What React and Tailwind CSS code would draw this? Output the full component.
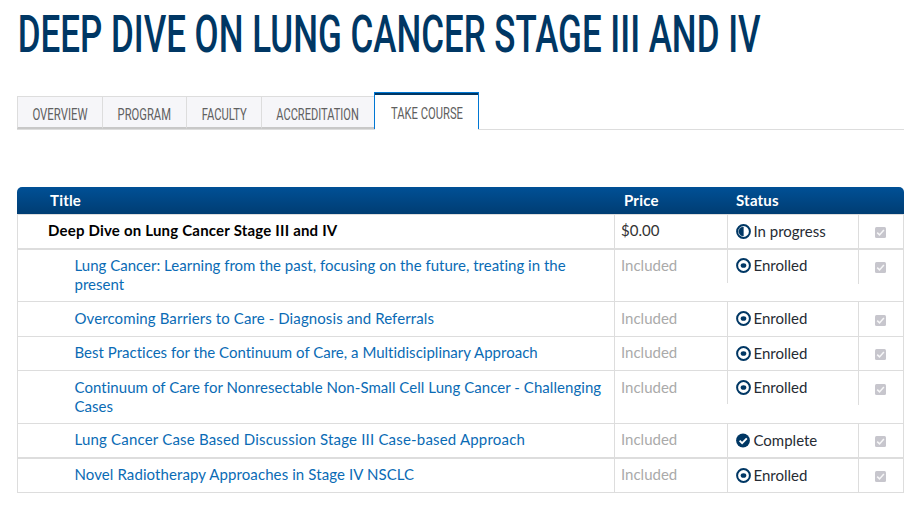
import React from 'react';
import clsx from 'clsx';

const tabs = [
  { label: 'Overview', width: 'w-[85px]', scale: 'scale-x-[0.69]' },
  { label: 'Program', width: 'w-[84px]', scale: 'scale-x-[0.68]' },
  { label: 'Faculty', width: 'w-[75px]', scale: 'scale-x-[0.68]' },
  { label: 'Accreditation', width: 'w-[113px]', scale: 'scale-x-[0.67]' },
];

const rows = [
  {
    title: 'Deep Dive on Lung Cancer Stage III and IV',
    price: '$0.00',
    status: 'In progress',
    parent: true,
    tracking: 'tracking-[0.2px]',
    height: 'h-[35px] border-b-2',
    textPad: 'pt-[6px]',
    statusPad: 'pt-[7px]',
    checkPad: 'pt-[12px]',
  },
  {
    title: 'Lung Cancer: Learning from the past, focusing on the future, treating in the present',
    price: 'Included',
    status: 'Enrolled',
    tracking: 'tracking-[0.01px]',
    height: 'h-[52px] border-b',
    textPad: 'pt-[6px]',
    statusPad: 'pt-[6px]',
    checkPad: 'pt-[12px]',
    short: true,
  },
  {
    title: 'Overcoming Barriers to Care - Diagnosis and Referrals',
    price: 'Included',
    status: 'Enrolled',
    tracking: 'tracking-[0.1px]',
    height: 'h-[35px] border-b',
    textPad: 'pt-[7px]',
    statusPad: 'pt-[7px]',
    checkPad: 'pt-[13px]',
  },
  {
    title: 'Best Practices for the Continuum of Care, a Multidisciplinary Approach',
    price: 'Included',
    status: 'Enrolled',
    tracking: 'tracking-[0.01px]',
    height: 'h-[34px] border-b',
    textPad: 'pt-[6px]',
    statusPad: 'pt-[7px]',
    checkPad: 'pt-[12px]',
  },
  {
    title: 'Continuum of Care for Nonresectable Non-Small Cell Lung Cancer - Challenging Cases',
    price: 'Included',
    status: 'Enrolled',
    tracking: 'tracking-[0.05px]',
    height: 'h-[53px] border-b',
    textPad: 'pt-[7px]',
    statusPad: 'pt-[7px]',
    checkPad: 'pt-[13px]',
    short: true,
  },
  {
    title: 'Lung Cancer Case Based Discussion Stage III Case-based Approach',
    price: 'Included',
    status: 'Complete',
    tracking: 'tracking-[0.19px]',
    height: 'h-[35px] border-b-2',
    textPad: 'pt-[6px]',
    statusPad: 'pt-[7px]',
    checkPad: 'pt-[12px]',
  },
  {
    title: 'Novel Radiotherapy Approaches in Stage IV NSCLC',
    price: 'Included',
    status: 'Enrolled',
    tracking: 'tracking-[0.1px]',
    height: 'h-[34px] border-b',
    textPad: 'pt-[6px]',
    statusPad: 'pt-[7px]',
    checkPad: 'pt-[12px]',
  },
];

const StatusIcon = ({ status }) => (
  <svg viewBox="0 0 15 15" className="w-[15px] h-[15px] shrink-0">
    {status === 'Complete' ? (
      <>
        <circle cx="7" cy="7.5" r="6.9" fill="#003764" />
        <path d="M3.6 7.7l2.5 2.5 4.7-4.9" fill="none" stroke="#fff" strokeWidth="1.9" />
      </>
    ) : (
      <circle cx="7.5" cy="7.5" r="6.4" fill="#fff" stroke="#003764" strokeWidth="2" />
    )}
    {status === 'Enrolled' && <ellipse cx="7.5" cy="7.5" rx="2.8" ry="2.3" fill="#003764" />}
    {status === 'In progress' && <path d="M7.3 3a4.5 4.5 0 0 0 0 9z" fill="#003764" stroke="#003764" strokeWidth="0.6" />}
  </svg>
);

const DisabledCheck = () => (
  <svg viewBox="0 0 11 11" className="w-[11px] h-[11px]">
    <rect width="11" height="11" rx="1.5" fill="#c7c6cd" />
    <path d="M2.2 5.6l2.3 2.3 4.4-5" fill="none" stroke="#f7f7f8" strokeWidth="1.5" />
  </svg>
);

const CourseRow = ({ row }) => (
  <div className={clsx('flex border-[#dddddd]', row.height)}>
    <div
      className={clsx(
        'w-[596px] shrink-0 leading-[18.5px]',
        row.textPad,
        row.tracking,
        row.parent ? 'pl-[30px] font-bold text-black' : 'pl-[56.5px] pr-2 text-[#0a6bb5]'
      )}
    >
      {row.title}
    </div>
    <div className={clsx('w-[113px] shrink-0 border-l border-[#dddddd] pl-[6px]', row.textPad, row.parent ? 'text-[#333]' : 'text-[#aaaaaa]')}>
      {row.price}
    </div>
    <div
      className={clsx(
        'flex w-[131px] shrink-0 items-start gap-[2.5px] border-l border-[#dddddd] pl-[8px] text-[#262b33]',
        row.statusPad,
        row.short && 'h-[33px]'
      )}
    >
      <span className="pt-[2px]"><StatusIcon status={row.status} /></span>
      <span>{row.status}</span>
    </div>
    <div className={clsx('w-[45px] shrink-0 border-l border-[#dddddd] pl-[16px]', row.checkPad, row.short && 'h-[34px]')}>
      <DisabledCheck />
    </div>
  </div>
);

const App = () => {
  return (
    <div className="h-[508px] w-[920px] overflow-hidden bg-white pl-[17px] pr-4 font-['Lato','Noto_Sans',sans-serif] text-[15px] leading-[18.5px] [font-variant-ligatures:none]">
      <h1 className="h-[92px] origin-left scale-x-[0.685] whitespace-nowrap pt-[5px] pl-[1px] font-['Roboto',sans-serif] text-[51px] leading-[60px] font-medium text-[#003764] uppercase">
        Deep Dive on Lung Cancer Stage III and IV
      </h1>

      <nav className="flex h-[38px] items-end border-b border-[#dddddd] font-['Roboto',sans-serif] text-[16.5px] text-[#606060] uppercase">
        {tabs.map((tab) => (
          <div
            key={tab.label}
            className={clsx('flex h-[33px] justify-center border-t border-b-2 border-l border-[#dddddd] border-b-[#c8c8c8] bg-[#f6f6f9] pt-[9px]', tab.width)}
          >
            <span className={tab.scale}>{tab.label}</span>
          </div>
        ))}
        <div className="flex h-[37px] w-[105px] justify-center border border-b-0 border-[#0077d4] bg-white">
          <div className="-mb-px flex w-full justify-center border-t-2 border-[#003764] bg-white pt-[10px]">
            <span className="scale-x-[0.68] whitespace-nowrap">Take course</span>
          </div>
        </div>
      </nav>

      <section className="mt-[57px] w-[887px]">
        <div className="flex h-[27px] rounded-t-[5px] bg-linear-to-b from-[#005096] to-[#003d73] pt-[4px] font-bold tracking-[0.2px] text-white">
          <div className="w-[607px] pl-[33px]">Title</div>
          <div className="w-[112px]">Price</div>
          <div>Status</div>
        </div>
        <div className="border-x border-t border-[#dddddd]">
          {rows.map((row) => (
            <CourseRow key={row.title} row={row} />
          ))}
        </div>
      </section>
    </div>
  );
};

export default App;
